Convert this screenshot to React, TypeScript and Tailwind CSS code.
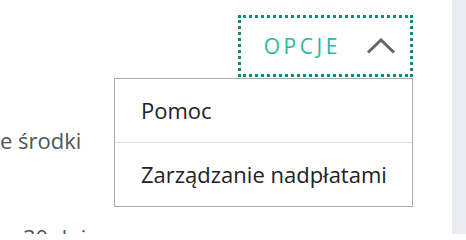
import React from 'react';

const App: React.FC = () => {
  return (
    <div className="w-[466px] h-[234px] flex overflow-hidden bg-white font-['Open_Sans',sans-serif]">
      <div className="relative flex-1">
        {/* Options button */}
        <div className="flex justify-end pt-[15px] pr-[39px]">
          <button className="flex items-center h-[62px] pl-[23px] pr-[14px] border-[3px] border-dotted border-[#13897a]">
            <span className="text-[21px] tracking-[0.17em] text-[#2bb7a0] leading-none">OPCJE</span>
            <svg width="30" height="16" viewBox="0 0 30 16" className="ml-[25px]">
              <path d="M2 14.5 L15 2 L28 14.5" fill="none" stroke="#666" strokeWidth="3" />
            </svg>
          </button>
        </div>

        {/* Background content */}
        <div className="mt-[52px] text-[22px] text-[#555] leading-none">e środki</div>
        <div className="mt-[75px] pl-[23px] text-[22px] text-[#555] leading-none">30 dni</div>

        {/* Dropdown menu */}
        <div className="absolute top-[78px] right-[39px] w-[299px] bg-white border border-[#aaa] text-[22px] text-[#222]">
          <div className="h-[64px] flex items-center pl-[26px] border-b border-[#ddd]">Pomoc</div>
          <div className="h-[63px] flex items-center pl-[26px]">Zarządzanie nadpłatami</div>
        </div>
      </div>
      <div className="w-[14px] bg-[#e9edf1]" />
    </div>
  );
};

export default App;
